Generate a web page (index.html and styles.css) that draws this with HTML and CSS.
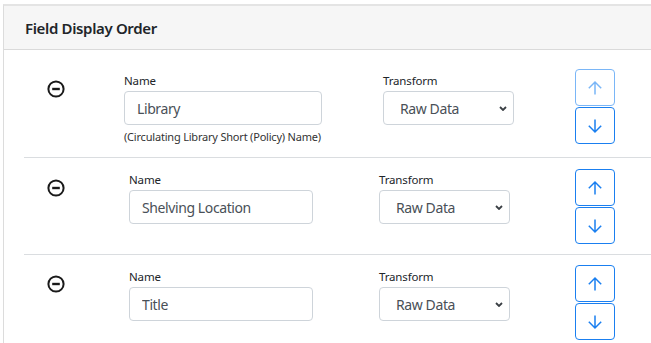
FILE: index.html
```html
<!DOCTYPE html>
<html lang="en">
<head>
<meta charset="utf-8">
<title>Field Display Order</title>
<link rel="stylesheet" href="styles.css">
</head>
<body>
<div class="card">
  <div class="card-header"><h2 class="card-title">Field Display Order</h2></div>
  <div class="card-body">

    <div class="row row--wide">
      <div class="cell-icon">
        <svg class="minus" viewBox="0 0 18 18" width="18" height="18"><circle cx="9" cy="9" r="7.6" fill="none" stroke="#1a1a1a" stroke-width="2"/><line x1="5.2" y1="9" x2="12.8" y2="9" stroke="#1a1a1a" stroke-width="2.4"/></svg>
      </div>
      <div class="field field--name">
        <label class="label">Name</label>
        <input class="input" type="text" value="Library">
        <small class="help">(Circulating Library Short (Policy) Name)</small>
      </div>
      <div class="field field--transform">
        <label class="label">Transform</label>
        <div class="select-wrap">
          <select class="select"><option>Raw Data</option></select>
          <svg class="chev" viewBox="0 0 8 5" width="8" height="5"><polyline points="1,1 4,4 7,1" fill="none" stroke="#3a3f44" stroke-width="1.8"/></svg>
        </div>
      </div>
      <div class="order-btns">
        <button class="btn btn--disabled" type="button"><svg viewBox="0 0 16 16" width="16" height="16"><path d="M8 14.5V2M1.8 8.2L8 2l6.2 6.2" fill="none" stroke="currentColor" stroke-width="1.5"/></svg></button>
        <button class="btn" type="button"><svg viewBox="0 0 16 16" width="16" height="16"><path d="M8 1.5V14M1.8 7.8L8 14l6.2-6.2" fill="none" stroke="currentColor" stroke-width="1.5"/></svg></button>
      </div>
    </div>

    <div class="row">
      <div class="cell-icon">
        <svg class="minus" viewBox="0 0 18 18" width="18" height="18"><circle cx="9" cy="9" r="7.6" fill="none" stroke="#1a1a1a" stroke-width="2"/><line x1="5.2" y1="9" x2="12.8" y2="9" stroke="#1a1a1a" stroke-width="2.4"/></svg>
      </div>
      <div class="field field--name">
        <label class="label">Name</label>
        <input class="input" type="text" value="Shelving Location">
      </div>
      <div class="field field--transform">
        <label class="label">Transform</label>
        <div class="select-wrap">
          <select class="select"><option>Raw Data</option></select>
          <svg class="chev" viewBox="0 0 8 5" width="8" height="5"><polyline points="1,1 4,4 7,1" fill="none" stroke="#3a3f44" stroke-width="1.8"/></svg>
        </div>
      </div>
      <div class="order-btns">
        <button class="btn" type="button"><svg viewBox="0 0 16 16" width="16" height="16"><path d="M8 14.5V2M1.8 8.2L8 2l6.2 6.2" fill="none" stroke="currentColor" stroke-width="1.5"/></svg></button>
        <button class="btn" type="button"><svg viewBox="0 0 16 16" width="16" height="16"><path d="M8 1.5V14M1.8 7.8L8 14l6.2-6.2" fill="none" stroke="currentColor" stroke-width="1.5"/></svg></button>
      </div>
    </div>

    <div class="row row--last">
      <div class="cell-icon">
        <svg class="minus" viewBox="0 0 18 18" width="18" height="18"><circle cx="9" cy="9" r="7.6" fill="none" stroke="#1a1a1a" stroke-width="2"/><line x1="5.2" y1="9" x2="12.8" y2="9" stroke="#1a1a1a" stroke-width="2.4"/></svg>
      </div>
      <div class="field field--name">
        <label class="label">Name</label>
        <input class="input" type="text" value="Title">
      </div>
      <div class="field field--transform">
        <label class="label">Transform</label>
        <div class="select-wrap">
          <select class="select"><option>Raw Data</option></select>
          <svg class="chev" viewBox="0 0 8 5" width="8" height="5"><polyline points="1,1 4,4 7,1" fill="none" stroke="#3a3f44" stroke-width="1.8"/></svg>
        </div>
      </div>
      <div class="order-btns">
        <button class="btn" type="button"><svg viewBox="0 0 16 16" width="16" height="16"><path d="M8 14.5V2M1.8 8.2L8 2l6.2 6.2" fill="none" stroke="currentColor" stroke-width="1.5"/></svg></button>
        <button class="btn" type="button"><svg viewBox="0 0 16 16" width="16" height="16"><path d="M8 1.5V14M1.8 7.8L8 14l6.2-6.2" fill="none" stroke="currentColor" stroke-width="1.5"/></svg></button>
      </div>
    </div>

  </div>
</div>
</body>
</html>
```

FILE: styles.css
```css
* { box-sizing: border-box; }

html, body {
  margin: 0;
  padding: 0;
  background: #fff;
  overflow: hidden;
}

body {
  font-family: "Noto Sans", "Open Sans", sans-serif;
  color: #212529;
  padding-top: 4px;
}

.card {
  margin: 0 -40px 0 3px;
  border-left: 1px solid #dcdcdc;
  border-top: 2px solid #e4e4e4;
  height: 400px;
}

.card-header {
  height: 44px;
  background: #f6f6f6;
  border-bottom: 1px solid #dadada;
  display: flex;
  align-items: center;
  padding: 1px 0 0 21px;
}

.card-title {
  margin: 0;
  font-size: 15px;
  font-weight: 600;
  letter-spacing: -0.35px;
  color: #212529;
}

.card-body {
  padding-left: 20px;
}

.row {
  --icon-w: 105px;
  --name-w: 184px;
  --gap1: 66px;
  --gap2: 65px;
  --field-top: 14px;
  --icon-top: 21px;
  --btn-top: 11px;
  display: flex;
  align-items: flex-start;
  height: 97px;
  border-bottom: 1px solid #dadde0;
}

.row--wide {
  --icon-w: 100px;
  --name-w: 198px;
  --gap1: 61px;
  --gap2: 61px;
  --field-top: 23px;
  --icon-top: 30px;
  --btn-top: 19px;
  height: 108px;
}

.row--last {
  --btn-top: 10px;
  --field-top: 14px;
  --icon-top: 20px;
}

.cell-icon {
  width: var(--icon-w);
  flex: none;
  padding: var(--icon-top) 0 0 23px;
}

.minus { display: block; }

.field {
  flex: none;
  margin-top: var(--field-top);
  display: flex;
  flex-direction: column;
}

.field--name { width: var(--name-w); }

.field--transform {
  width: 131px;
  margin-left: var(--gap1);
}

.label {
  font-size: 11.5px;
  line-height: 16px;
  letter-spacing: -0.15px;
  margin-bottom: 2px;
  color: #212529;
}

.input {
  height: 34px;
  width: 100%;
  border: 1px solid #ced4da;
  border-radius: 4px;
  padding: 0 12px;
  font-family: inherit;
  font-size: 14px;
  letter-spacing: -0.4px;
  color: #495057;
  background: #fff;
}

.help {
  margin-top: 4px;
  font-size: 11px;
  line-height: 16px;
  letter-spacing: -0.2px;
  color: #333;
  white-space: nowrap;
}

.select-wrap {
  position: relative;
  width: 100%;
}

.select {
  -webkit-appearance: none;
  appearance: none;
  height: 34px;
  width: 100%;
  border: 1px solid #ced4da;
  border-radius: 4px;
  padding: 0 0 0 16px;
  font-family: inherit;
  font-size: 14px;
  letter-spacing: -0.4px;
  color: #495057;
  background: #fff;
}

.chev {
  position: absolute;
  right: 7px;
  top: 15px;
  display: block;
}

.order-btns {
  flex: none;
  margin-left: var(--gap2);
  margin-top: var(--btn-top);
  display: flex;
  flex-direction: column;
  gap: 1px;
}

.btn {
  width: 40px;
  height: 37px;
  border: 1px solid #1a7ff0;
  border-radius: 4px;
  background: #fff;
  color: #1a7ff0;
  padding: 0;
  display: flex;
  align-items: center;
  justify-content: center;
}

.btn svg { display: block; }

.btn--disabled {
  border-color: #7ab6f7;
  color: #7ab6f7;
}
```
